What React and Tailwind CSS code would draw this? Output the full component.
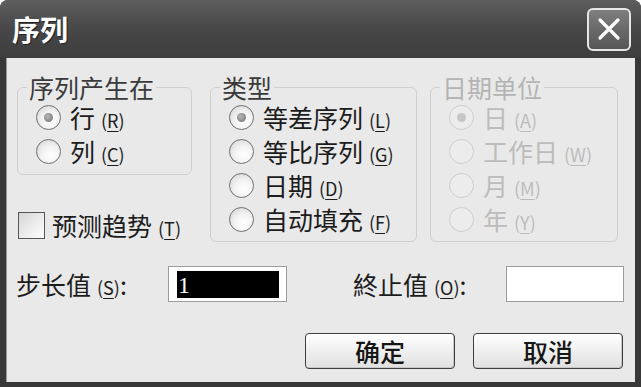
import React from 'react';

const cjk = { fontFamily: '"Noto Sans CJK SC", "Noto Sans", sans-serif' };

// little "(R)" style access key, underlined letter
const Key = ({ k, dim }) => (
  <span className={`ml-[6px] text-[18px] ${dim ? 'text-[#bcbcbc]' : ''}`}>
    (<span className="underline underline-offset-[3px]">{k}</span>)
  </span>
);

const Radio = ({ checked, disabled }) => (
  <span
    className={`flex h-[25px] w-[25px] shrink-0 items-center justify-center rounded-full border-[1.5px] ${
      disabled
        ? 'border-[#cdcdcd] bg-[#ececec]'
        : 'border-[#707070] bg-[radial-gradient(circle_at_60%_65%,#ffffff_0%,#f2f2f2_45%,#cfcfcf_100%)]'
    }`}
  >
    {checked && (
      <span
        className={`h-[9px] w-[9px] rounded-full ${
          disabled ? 'bg-[#c6c6c6]' : 'bg-[radial-gradient(circle_at_40%_40%,#b8b8b8,#6c6c6c)]'
        }`}
      />
    )}
  </span>
);

const Option = ({ label, k, checked, disabled }) => (
  <div className="flex h-[34px] items-center gap-[9px]">
    <Radio checked={checked} disabled={disabled} />
    <span className={`flex items-baseline text-[25px] leading-none ${disabled ? 'text-[#bcbcbc]' : 'text-[#1c1c1c]'}`}>
      {label}
      <Key k={k} dim={disabled} />
    </span>
  </div>
);

const Group = ({ title, disabled, className, children }) => (
  <fieldset className={`rounded-[6px] border border-[#cfcfcf] pb-[5px] ${className}`}>
    <legend
      className={`ml-[9px] px-[2px] text-[25px] leading-[24px] ${disabled ? 'text-[#b4b4b4]' : 'text-[#3a3a3a]'}`}
    >
      {title}
    </legend>
    <div className="pt-[1px] pl-[18px]">{children}</div>
  </fieldset>
);

const Field = ({ selected }) => (
  <div className="flex h-[36px] border border-[#9c9c9c] bg-white pt-[4px] pr-[7px] pb-[3px] pl-[8px]">
    {selected && (
      <div className="flex flex-1 items-center bg-black pl-[1px] text-[24px] leading-none text-white" style={{ fontFamily: '"Liberation Serif", serif' }}>
        1
      </div>
    )}
  </div>
);

const Button = ({ children }) => (
  <button className="flex h-[36px] w-[150px] items-center justify-center rounded-[4px] border-[1.5px] border-[#3e3e3e] bg-gradient-to-b from-white to-[#e0e0e0] text-[25px] font-medium leading-none text-[#161616] shadow-[inset_-1px_-1px_0_#c8c8c8]">
    {children}
  </button>
);

export default function App() {
  return (
    <div className="flex h-[387px] w-[641px] flex-col overflow-hidden rounded-t-[8px] bg-[#383838]" style={cjk}>
      {/* title bar */}
      <div className="flex h-[58px] items-center justify-between bg-gradient-to-b from-[#5e5e5e] via-[#474747] to-[#3e3e3e] pl-[12px] pr-[10px]">
        <span className="text-[28px] font-bold leading-none text-white [text-shadow:1px_1px_0_#222]">序列</span>
        <button className="flex h-[43px] w-[44px] items-center justify-center rounded-[6px] border-2 border-[#e6e6e6] bg-gradient-to-b from-[#7e7e7e] to-[#565656]">
          <svg width="26" height="26" viewBox="0 0 26 26">
            <path d="M4 4 L22 22 M22 4 L4 22" stroke="#fff" strokeWidth="3.2" strokeLinecap="round" />
          </svg>
        </button>
      </div>

      {/* body */}
      <div className="mx-[6px] mb-[5px] flex flex-1 flex-col border-l border-[#9a9a9a] bg-[#e9e9e9] pt-[17px] pl-[10px]">
        <div className="flex items-start">
          <div className="flex w-[175px] flex-col">
            <Group title="序列产生在" className="w-[175px] pb-[6px]">
              <Option label="行" k="R" checked />
              <Option label="列" k="C" />
            </Group>
            <label className="mt-[37px] ml-[1px] flex items-center gap-[7px]">
              <span className="h-[27px] w-[27px] border-[1.5px] border-[#555] bg-gradient-to-br from-[#d6d6d6] to-white" />
              <span className="flex items-baseline text-[25px] leading-none text-[#1c1c1c]">
                预测趋势
                <Key k="T" />
              </span>
            </label>
          </div>
          <Group title="类型" className="ml-[18px] w-[207px]">
            <Option label="等差序列" k="L" checked />
            <Option label="等比序列" k="G" />
            <Option label="日期" k="D" />
            <Option label="自动填充" k="F" />
          </Group>
          <Group title="日期单位" disabled className="ml-[13px] w-[188px]">
            <Option label="日" k="A" checked disabled />
            <Option label="工作日" k="W" disabled />
            <Option label="月" k="M" disabled />
            <Option label="年" k="Y" disabled />
          </Group>
        </div>

        <div className="mt-[24px] flex items-center">
          <span className="ml-[-1px] flex w-[152px] items-baseline text-[25px] leading-none text-[#1c1c1c]">
            步长值<Key k="S" />:
          </span>
          <div className="w-[119px]">
            <Field selected />
          </div>
          <span className="ml-[66px] flex w-[153px] items-baseline text-[25px] leading-none text-[#1c1c1c]">
            終止值<Key k="O" />:
          </span>
          <div className="w-[118px]">
            <Field />
          </div>
        </div>

        <div className="mt-[31px] flex gap-[18px] pl-[288px]">
          <Button>确定</Button>
          <Button>取消</Button>
        </div>
      </div>
    </div>
  );
}
